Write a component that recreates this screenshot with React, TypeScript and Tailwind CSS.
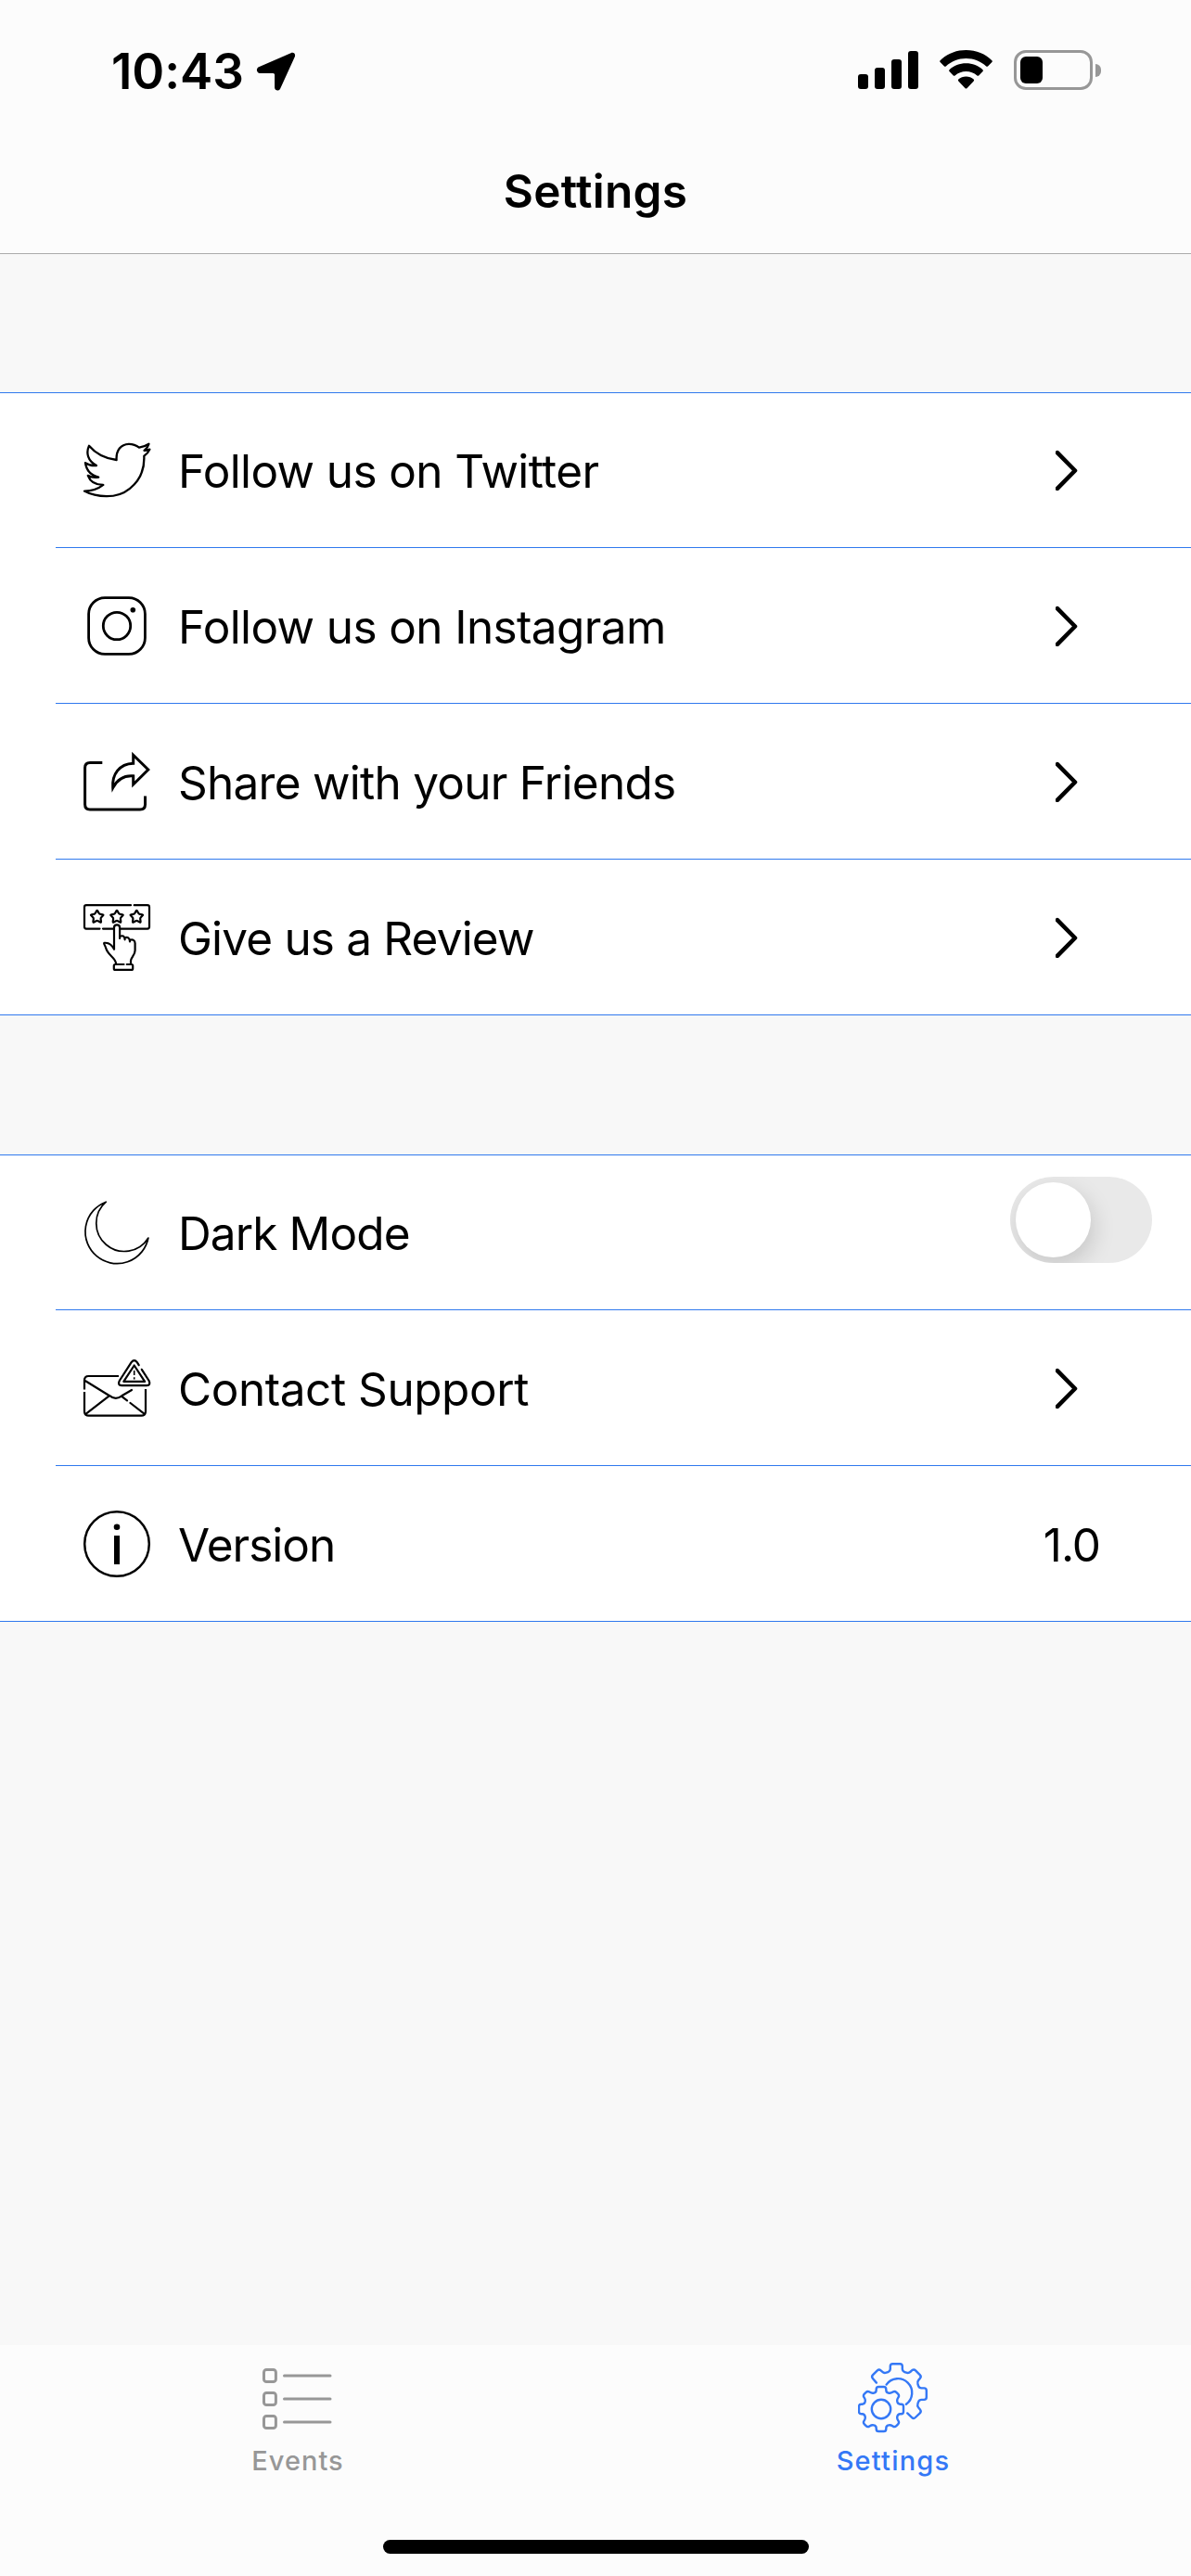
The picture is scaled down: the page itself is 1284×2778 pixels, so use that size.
import React from "react";

type Point = [number, number];

/** Builds a polygon path whose corners are rounded with quadratic curves. */
function roundedPath(points: Point[], radius: number, closed: boolean): string {
  const n = points.length;
  let d = "";
  for (let i = 0; i < n; i++) {
    const p = points[i];
    if (!closed && (i === 0 || i === n - 1)) {
      d += `${i === 0 ? "M" : "L"}${p[0]} ${p[1]}`;
      continue;
    }
    const a = points[(i - 1 + n) % n];
    const b = points[(i + 1) % n];
    const toward = (q: Point): Point => {
      const len = Math.hypot(q[0] - p[0], q[1] - p[1]);
      const t = Math.min(radius / len, 0.5);
      return [p[0] + (q[0] - p[0]) * t, p[1] + (q[1] - p[1]) * t];
    };
    const s = toward(a);
    const e = toward(b);
    d += `${d ? "L" : "M"}${s[0].toFixed(2)} ${s[1].toFixed(2)}Q${p[0]} ${p[1]} ${e[0].toFixed(2)} ${e[1].toFixed(2)}`;
  }
  return closed ? d + "Z" : d;
}

const TOOTH: Point[] = [
  [-5.2, -24], [5.2, -24], [5.4, -18], [10.2, -16.8],
  [14.6, -19.8], [19.8, -14.6], [16.8, -10.2], [18, -5.4],
];

const smallGear: Point[] = [0, 1, 2, 3].flatMap((quarter) =>
  TOOTH.map(([x, y]): Point => {
    let p: Point = [x, y];
    for (let i = 0; i < quarter; i++) p = [-p[1], p[0]];
    return [25 + p[0], 50 + p[1]];
  }),
);

const bigGear: Point[] = [
  [19.9, 21.6], [14.2, 15], [22.7, 6.5], [28, 11.5], [34.8, 9.2], [34.8, 1.2], [47.8, 1.2],
  [47.8, 9.2], [54.6, 11.5], [60.2, 6.5], [68.6, 15], [63.6, 20.5], [65.9, 27.4], [73.8, 27.4],
  [73.8, 39.9], [65.9, 39.9], [63.6, 46.5], [68.6, 52.5], [60, 60.8], [53.2, 54.4],
];

function star(cx: number, cy: number): Point[] {
  return Array.from({ length: 10 }, (_, i): Point => {
    const r = i % 2 ? 3.9 : 7.6;
    const a = -Math.PI / 2 + (i * Math.PI) / 5;
    return [cx + r * Math.cos(a), cy + r * Math.sin(a)];
  });
}

function RowIcon({ children, width = 2.3 }: { children: React.ReactNode; width?: number }) {
  return (
    <svg
      className="size-[72px] shrink-0 overflow-visible"
      viewBox="0 0 72 72"
      fill="none"
      stroke="#000"
      strokeWidth={width}
      strokeLinecap="round"
      strokeLinejoin="round"
    >
      {children}
    </svg>
  );
}

const TwitterIcon = () => (
  <RowIcon>
    <path d="M6 9.7C13 18 24 23.5 35.6 25C35 14.5 40.5 8 48.7 7.8C53.5 7.7 57 9.3 60 11.7C64 11 67.5 9.8 70.5 7.8C69.8 10.5 68.5 12.5 65.5 14.8C67.8 14.8 69.5 14.4 71.4 13.6C70 16.8 68 19 65.3 20.7C66 35 61 47 50 55.8C43 61.5 34.5 64.2 25 64.2C16 64.2 8 62.5 1 58.6C8.5 58.6 15.5 56.5 21.3 51.9C13 51.8 7 48 4.8 41.8C8.5 44 12 44.2 16.2 43.6C8 41.5 3 36 2 28.2C5.5 30.6 9.5 31.4 14 31C4.5 26 2.5 17.5 6 9.7Z" />
  </RowIcon>
);

const InstagramIcon = () => (
  <RowIcon width={2.8}>
    <rect x="5.6" y="5.6" width="60.8" height="60.8" rx="17.5" />
    <circle cx="36" cy="36" r="14.7" />
    <circle cx="53.3" cy="18.7" r="2.8" fill="#000" stroke="none" />
  </RowIcon>
);

const ShareIcon = () => (
  <RowIcon width={3}>
    <path strokeLinecap="butt" d="M20.3 15.5H7C3.5 15.5 1.6 17.6 1.6 21V60.5C1.6 64 3.6 66 7 66H61C64.6 66 66.5 64 66.5 60.5V51.5" />
    <path strokeLinejoin="miter" d="M53.7 7.2L69.8 23L53.7 39V29.8C43 28.9 36.5 33.5 31.7 42.5C30.6 28 38.5 16.8 53.7 16.2Z" />
  </RowIcon>
);

const ReviewIcon = () => (
  <RowIcon width={2.2}>
    <path d="M51 1.2H3Q1 1.2 1 3.2V24.6Q1 26.6 3 26.6H17.5M21 26.6H32.5M39.5 26.6H69Q71 26.6 71 24.6V3.2Q71 1.2 69 1.2H54.7" />
    {[14.7, 36, 57.3].map((x) => (
      <path key={x} d={roundedPath(star(x, 13.8), 1.2, true)} />
    ))}
    <path d="M33 48.5V25.5C33 21.4 39.1 21.4 39.1 25.5V37M39.1 35.2C41.8 33.2 44.6 34.5 44.6 38.3M44.6 36.5C47.3 35 50 36.4 50 40.5M50 38.8C53 37.6 55.6 39 55.6 42.3V50C55.6 55 51 57.5 51 61.5V64.5" />
    <path d="M33 48.5C30.5 44 27 41.3 22.6 41.8C21.3 42 23.4 44.8 24.2 47.5C26.3 55.5 34.8 57.5 35.2 64.5" />
    <path d="M43.5 65H34.3Q32.8 65 32.8 66.5V69.4Q32.8 70.9 34.3 70.9H51.7Q53.2 70.9 53.2 69.4V66.5Q53.2 65 51.7 65H46.8" />
  </RowIcon>
);

const MoonIcon = () => (
  <RowIcon width={1.7}>
    <path d="M24.3 3.2A34.3 34.3 0 1 0 69.9 42A30.3 30.3 0 1 1 24.3 3.2Z" />
  </RowIcon>
);

const SupportIcon = () => (
  <RowIcon width={2.2}>
    <path strokeLinecap="butt" d="M38 23H5.5Q1 23 1 27.5V37.5M1 40V61Q1 65.6 5.5 65.6H62.5Q67 65.6 67 61V37" />
    <path d="M2.2 28.3L27.3 43.7Q34.5 49.5 41.3 44.3L52 38M26.7 45.2L2.8 63.6M41.5 45.2L47 49.3M50.5 52L65.8 63.8" />
    <path d="M59.7 11.2L57.8 8.2Q54.7 4.2 51.6 8.2L38.8 28Q36.4 32.8 41.2 33.2H68.2Q72.8 32.8 70.6 28L62.8 15.8" />
    <path d="M54.7 11.5L43.3 28.9H66.1Z" />
    <path strokeLinecap="butt" strokeWidth="1.6" d="M54.7 17V22M54.7 24.3V26.4" />
  </RowIcon>
);

const InfoIcon = () => (
  <RowIcon width={2.5}>
    <circle cx="36" cy="36" r="34.8" />
    <circle cx="36" cy="17.7" r="3.3" fill="#000" stroke="none" />
    <path d="M33 27H39V58H33Z" fill="#000" stroke="none" />
  </RowIcon>
);

const Chevron = () => (
  <svg className="mr-[122px] h-11 w-6 shrink-0" viewBox="0 0 24 44" fill="none" stroke="#000" strokeWidth="4.6" strokeLinecap="round" strokeLinejoin="round">
    <path d="M1.9 3.1L21 22.5L1.9 41.9" />
  </svg>
);

const Toggle = () => (
  <div
    role="switch"
    aria-checked="false"
    className="mr-[42px] -mt-[27px] flex h-[93px] w-[153px] items-center overflow-hidden rounded-full bg-[#e9e9e9] px-1.5"
  >
    <div className="size-[81px] rounded-full bg-white shadow-[3px_9px_24px_0px_rgba(0,0,0,0.15)]" />
  </div>
);

interface Row {
  icon: React.ReactNode;
  label: string;
  spacing: string;
  accessory: React.ReactNode;
}

const social: Row[] = [
  { icon: <TwitterIcon />, label: "Follow us on Twitter", spacing: "tracking-[-0.62px]", accessory: <Chevron /> },
  { icon: <InstagramIcon />, label: "Follow us on Instagram", spacing: "tracking-[-0.62px]", accessory: <Chevron /> },
  { icon: <ShareIcon />, label: "Share with your Friends", spacing: "tracking-[-0.74px]", accessory: <Chevron /> },
  { icon: <ReviewIcon />, label: "Give us a Review", spacing: "tracking-[-0.83px]", accessory: <Chevron /> },
];

const general: Row[] = [
  { icon: <MoonIcon />, label: "Dark Mode", spacing: "tracking-[-0.88px]", accessory: <Toggle /> },
  { icon: <SupportIcon />, label: "Contact Support", spacing: "tracking-[-0.45px]", accessory: <Chevron /> },
  {
    icon: <InfoIcon />,
    label: "Version",
    spacing: "tracking-[-1px]",
    accessory: <span className="mr-[98px] pt-0.5 tracking-[-1.07px]">1.0</span>,
  },
];

function Section({ rows }: { rows: Row[] }) {
  return (
    <section className="border-y border-[#3079ee] bg-white">
      {rows.map((row, i) => (
        <div
          key={row.label}
          className={
            i === 0
              ? "ml-[60px] flex h-[166px] items-center pl-[30px]"
              : "ml-[60px] flex h-[168px] items-center border-t border-[#3079ee] pl-[30px]"
          }
        >
          {row.icon}
          <span className={`ml-[30px] flex-1 pt-0.5 whitespace-nowrap ${row.spacing}`}>{row.label}</span>
          {row.accessory}
        </div>
      ))}
    </section>
  );
}

function StatusBar() {
  return (
    <div className="flex h-[153px] items-start pr-[97px] pl-[120px]">
      <span className="mt-[45px] text-[53px] leading-16 font-semibold tracking-[-0.07px]">10:43</span>
      <svg className="mt-14 ml-[13px] size-11" viewBox="0 0 44 44">
        <path d="M3 16.2L37.6 1.2C40.6 0 43 2.2 41.8 5.2L26.2 39.6C24.8 42.8 20.2 42 20.1 38.6V24.6Q20.1 22.9 18.4 22.9H4.2C.6 22.9 -.4 17.8 3 16.2Z" />
      </svg>
      <div className="ml-auto flex items-start pt-[54px]">
        <div className="flex h-[42px] items-end gap-[7px]">
          <div className="h-4 w-[11px] rounded-[3px] bg-black" />
          <div className="h-[23px] w-[11px] rounded-[3px] bg-black" />
          <div className="h-8 w-[11px] rounded-[3px] bg-black" />
          <div className="h-[41px] w-[11px] rounded-[3px] bg-black" />
        </div>
        <svg className="ml-[23px] h-[42px] w-[57px]" viewBox="0 0 57 42">
          <path d="M28.5 0C39.5 0 49.5 4.3 56.4 11.2Q57.3 12.1 56.4 13L52 17.4Q51.1 18.2 50.2 17.4C44.5 12.2 36.9 9 28.5 9S12.5 12.2 6.8 17.4Q5.9 18.2 5 17.4L.6 13Q-.3 12.1 .6 11.2C7.5 4.3 17.5 0 28.5 0Z" />
          <path d="M28.5 14.3C35.4 14.3 41.7 16.9 46.5 21.2Q47.4 22.1 46.5 23L42.2 27.4Q41.3 28.2 40.4 27.4C37.2 24.7 33 23.1 28.5 23.1S19.8 24.7 16.6 27.4Q15.7 28.2 14.8 27.4L10.5 23Q9.6 22.1 10.5 21.2C15.3 16.9 21.6 14.3 28.5 14.3Z" />
          <path d="M28.5 28.6C31.7 28.6 34.5 29.7 36.7 31.6Q37.6 32.5 36.7 33.4L29.4 41.2Q28.5 42 27.6 41.2L20.3 33.4Q19.4 32.5 20.3 31.6C22.5 29.7 25.3 28.6 28.5 28.6Z" />
        </svg>
        <div className="ml-[23px] flex h-[43px] items-center">
          <div className="flex h-[43px] w-[85px] items-center rounded-[13px] border-3 border-[#979797] pl-1">
            <div className="h-[29px] w-6 rounded-md bg-black" />
          </div>
          <div className="ml-[3px] h-[14px] w-1.5 rounded-r-full bg-[#979797]" />
        </div>
      </div>
    </div>
  );
}

const EventsIcon = () => (
  <svg className="size-[76px]" viewBox="0 0 76 76" fill="none" stroke="#979797" strokeWidth="3" strokeLinecap="round">
    {[14, 39, 64].map((y) => (
      <g key={y}>
        <rect x="1.5" y={y - 6.4} width="12.9" height="12.9" rx="2.8" />
        <path d={`M23.5 ${y}H73`} />
      </g>
    ))}
  </svg>
);

const GearsIcon = () => (
  <svg className="size-[76px]" viewBox="0 0 76 76" fill="none" stroke="#3478f6" strokeWidth="2.4" strokeLinecap="round" strokeLinejoin="round">
    <path d={roundedPath(bigGear, 2.6, false)} />
    <path d="M30.6 23.6A15.2 15.2 0 1 1 51.9 44.7" />
    <path d={roundedPath(smallGear, 2.4, true)} />
    <circle cx="25" cy="50" r="10.2" />
  </svg>
);

export default function App() {
  return (
    <div className="flex h-[2778px] w-[1284px] flex-col overflow-hidden bg-[#f8f8f8] font-[Inter,sans-serif] text-[49.5px] leading-[60px] text-black">
      <header className="h-[274px] border-b border-[#ababab] bg-[#fcfcfc]">
        <StatusBar />
        <h1 className="pt-[23px] text-center font-semibold tracking-[0.28px]">Settings</h1>
      </header>

      <main className="flex flex-1 flex-col gap-[150px] pt-[149px]">
        <Section rows={social} />
        <Section rows={general} />
      </main>

      <nav className="h-[249px] bg-[#fcfcfc] text-[29px] leading-9 font-medium">
        <div className="grid h-[210px] grid-cols-2 pt-[19px]">
          <div className="flex flex-col items-center text-[#979797]">
            <EventsIcon />
            <span className="mt-3 tracking-[1.02px]">Events</span>
          </div>
          <div className="flex flex-col items-center text-[#3478f6]">
            <GearsIcon />
            <span className="mt-3 tracking-[1.21px]">Settings</span>
          </div>
        </div>
        <div className="mx-auto h-[15px] w-[459px] rounded-full bg-black" />
      </nav>
    </div>
  );
}
